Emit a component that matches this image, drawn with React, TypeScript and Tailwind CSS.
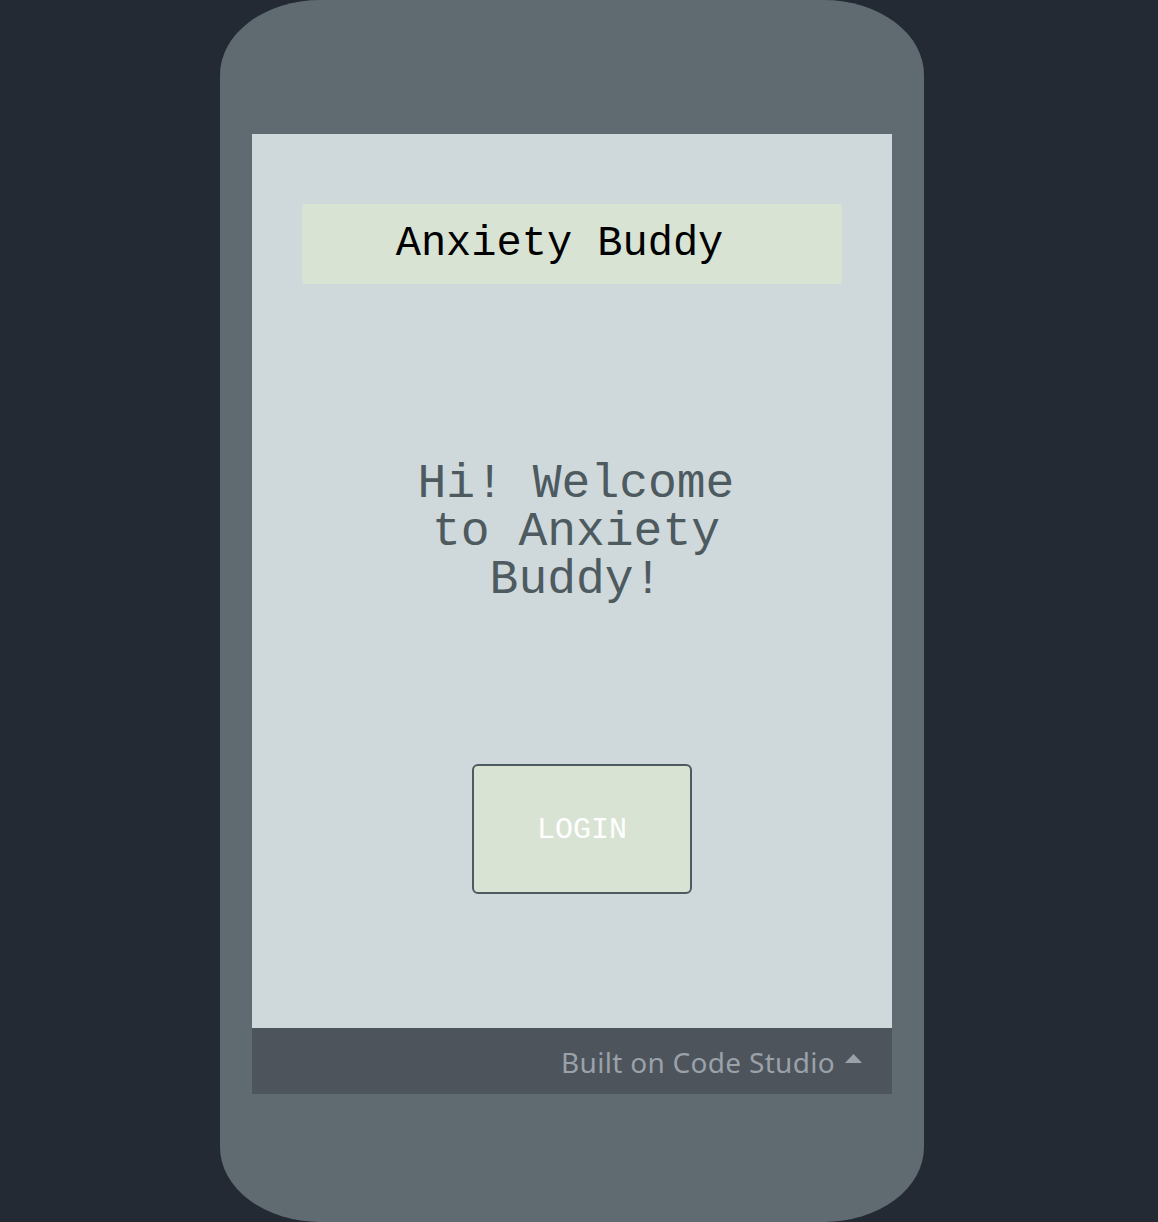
function App() {
  return (
    <div className="min-h-screen bg-[#232a34] pl-[220px]">
      <div className="w-[704px] h-[1222px] bg-[#5f6a71] rounded-[100px/75px] pt-[134px] px-[32px] flex flex-col">
        <div className="h-[894px] bg-[#cfd9db] flex flex-col items-center font-['Courier_New','Nimbus_Mono_PS','FreeMono','Liberation_Mono',monospace]">
          <div className="mt-[70px] w-[540px] h-[80px] bg-[#d9e3d4] rounded-[3px] flex items-center justify-center pr-[25px] text-[42px] text-black">
            Anxiety Buddy
          </div>
          <div className="mt-[176px] w-[340px] ml-[8px] text-center text-[48px] leading-[48px] text-[#4d5a5f]">
            Hi! Welcome to Anxiety Buddy!
          </div>
          <button className="mt-[160px] w-[220px] h-[130px] pt-[2px] bg-[#d9e3d4] border-2 border-[#4d5a5f] rounded-[6px] text-white text-[30px] ml-[20px]">
            LOGIN
          </button>
        </div>
        <div className="h-[66px] bg-[#4d545c] flex items-center justify-end pr-[30px] pt-[1px] gap-[10px] font-['Noto_Sans',sans-serif] text-[28px] tracking-[0.3px] text-[#9aa1a8]">
          <span>Built on Code Studio</span>
          <svg width="17" height="9" viewBox="0 0 17 9" className="-mt-[6px]">
            <path d="M0 9 L8.5 0 L17 9 Z" fill="#9aa1a8" />
          </svg>
        </div>
      </div>
    </div>
  );
}

export default App;
